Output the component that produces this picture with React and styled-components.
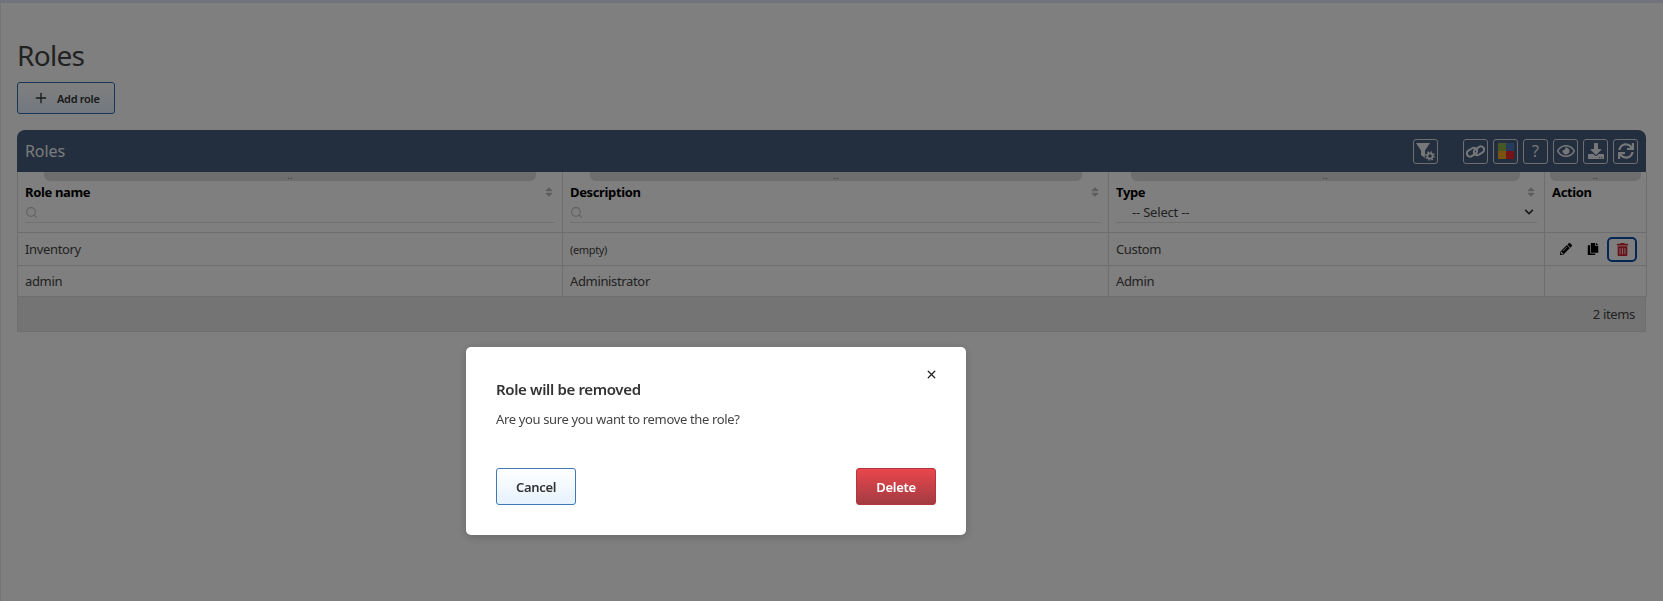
import React from "react";
import styled, { createGlobalStyle } from "styled-components";
import {
  FaRegEye,
  FaDownload,
  FaSync,
  FaPencilAlt,
  FaCopy,
  FaTrashAlt,
  FaSort,
  FaChevronDown,
} from "react-icons/fa";
import { Search, Plus, X } from "lucide-react";

const GlobalStyle = createGlobalStyle`
  html, body {
    margin: 0;
    padding: 0;
    height: 100%;
    background: #fff;
    overflow: hidden;
    font-family: "Noto Sans", "Liberation Sans", sans-serif;
    color: #333;
  }
`;

const Page = styled.div`
  box-sizing: border-box;
  height: 601px;
  border-top: 3px solid #dfe9f5;
  border-left: 1px solid #e8e8e8;
  padding: 35px 18px 0 16px;
`;

const Title = styled.h1`
  margin: 0 0 10px;
  font-size: 28px;
  line-height: 34px;
  font-weight: 400;
  letter-spacing: -0.7px;
  color: #444;
`;

const AddButton = styled.button`
  display: flex;
  align-items: center;
  gap: 8px;
  box-sizing: border-box;
  width: 98px;
  height: 32px;
  padding: 0 0 0 15px;
  border: 1px solid #2f6fb5;
  border-radius: 3px;
  background: linear-gradient(#fff, #e6f2fd);
  font: 600 11px "Noto Sans", sans-serif;
  letter-spacing: -0.3px;
  color: #333;
`;

const Grid = styled.div`
  margin-top: 16px;
  width: 1629px;
`;

const GridHeader = styled.div`
  display: flex;
  align-items: center;
  box-sizing: border-box;
  height: 42px;
  padding: 0 8px;
  border-radius: 8px 8px 0 0;
  background: #475c7d;
`;

const GridTitle = styled.div`
  flex: 1;
  font-size: 16px;
  letter-spacing: -0.1px;
  color: #f4f6f9;
`;

const ToolGroup = styled.div`
  display: flex;
  gap: 5px;
  margin-right: ${({ $spaced }) => ($spaced ? "25px" : "0")};
`;

const ToolButton = styled.div`
  display: flex;
  align-items: center;
  justify-content: center;
  box-sizing: border-box;
  width: 25px;
  height: 25px;
  border: 1px solid #d8dce2;
  border-radius: 3px;
  font-size: ${({ $size }) => $size || 16}px;
  color: #eceef1;
`;

const Swatches = styled.div`
  display: grid;
  grid-template-columns: 8px 8px;
  grid-template-rows: 8px 8px;
`;

const Swatch = styled.span`
  background: ${({ $color }) => $color};
`;

const Table = styled.table`
  width: 100%;
  table-layout: fixed;
  border-collapse: collapse;
  font-size: 13px;
  letter-spacing: -0.35px;
  color: #444;
`;

const HeadCell = styled.th`
  position: relative;
  box-sizing: border-box;
  height: 59px;
  padding: 10px 7px 9px;
  border: 1px solid #dcdcdc;
  border-top: none;
  text-align: left;
  vertical-align: top;
`;

const ResizeGrip = styled.div`
  position: absolute;
  top: 0;
  left: ${({ $left }) => $left}px;
  right: ${({ $right }) => $right}px;
  height: 9px;
  border-radius: 0 0 6px 6px;
  background: #dcdcdc;
  text-align: center;
  font-size: 8px;
  line-height: 8px;
  letter-spacing: 0.5px;
  font-weight: 400;
  color: #555;
`;

const HeadRow = styled.div`
  display: flex;
  align-items: center;
  justify-content: space-between;
  height: 20px;
  font-size: 13px;
  font-weight: 700;
  color: #000;
`;

const SortIcon = styled(FaSort)`
  color: #bdbdbd;
  font-size: 12px;
`;

const FilterBox = styled.div`
  display: flex;
  align-items: center;
  height: 19px;
  margin-top: 1px;
  border-bottom: 1px solid #e2e2e2;
  color: #c0c0c0;
`;

const SelectBox = styled.div`
  position: relative;
  height: 20px;
  border-bottom: 1px solid #e2e2e2;
`;

const TypeSelect = styled.select`
  appearance: none;
  width: 100%;
  height: 20px;
  padding: 0 0 0 16px;
  border: none;
  background: transparent;
  font: 400 13px "Noto Sans", sans-serif;
  letter-spacing: -0.2px;
  color: #444;
`;

const SelectArrow = styled(FaChevronDown)`
  position: absolute;
  right: 3px;
  top: 5px;
  font-size: 10px;
  color: #333;
  pointer-events: none;
`;

const Cell = styled.td`
  box-sizing: border-box;
  height: ${({ $h }) => $h}px;
  padding: 0 7px;
  border: 1px solid #dcdcdc;
  vertical-align: middle;
  font-size: ${({ $small }) => ($small ? "11px" : "13px")};
`;

const Actions = styled.div`
  display: flex;
  align-items: center;
  justify-content: flex-end;
  margin-right: 2px;
`;

const ActionIcon = styled.span`
  display: flex;
  align-items: center;
  justify-content: center;
  width: ${({ $w }) => $w}px;
  font-size: 12px;
  color: #000;
`;

const DeleteAction = styled.span`
  display: flex;
  align-items: center;
  justify-content: center;
  box-sizing: border-box;
  width: 30px;
  height: 25px;
  border: 2px solid #0a4ba8;
  border-radius: 5px;
  font-size: 13px;
  color: #d32330;
`;

const GridFooter = styled.div`
  display: flex;
  align-items: center;
  justify-content: flex-end;
  box-sizing: border-box;
  height: 35px;
  padding: 0 10px;
  border: 1px solid #dcdcdc;
  border-top: none;
  background: #e8e8e8;
  font-size: 13px;
  letter-spacing: -0.35px;
  color: #444;
`;

const Overlay = styled.div`
  position: fixed;
  inset: 0;
  box-sizing: border-box;
  padding: 347px 0 0 466px;
  background: rgba(0, 0, 0, 0.5);
`;

const Modal = styled.div`
  position: relative;
  box-sizing: border-box;
  width: 500px;
  height: 188px;
  padding: 31px 30px 30px;
  border-radius: 5px;
  background: #fff;
  box-shadow: 0 2px 10px rgba(0, 0, 0, 0.2);
`;

const CloseButton = styled.span`
  position: absolute;
  top: 17px;
  right: 28px;
  color: #222;
`;

const ModalTitle = styled.div`
  font-size: 15px;
  line-height: 22px;
  font-weight: 600;
  letter-spacing: -0.35px;
  color: #333;
`;

const ModalText = styled.div`
  margin-top: 9px;
  font-size: 13px;
  line-height: 20px;
  letter-spacing: -0.35px;
  color: #444;
`;

const ModalFooter = styled.div`
  display: flex;
  justify-content: space-between;
  margin-top: 39px;
`;

const ModalButton = styled.button`
  box-sizing: border-box;
  width: 80px;
  height: 37px;
  border-radius: 3px;
  font: 600 13px "Noto Sans", sans-serif;
  letter-spacing: -0.3px;
  border: 1px solid ${({ $danger }) => ($danger ? "#b5363c" : "#3e78b8")};
  color: ${({ $danger }) => ($danger ? "#fff" : "#333")};
  background: ${({ $danger }) =>
    $danger
      ? "linear-gradient(#ea464c, #a23c42)"
      : "linear-gradient(#fff, #e6f2fd)"};
`;

const FilterGearIcon = () => (
  <svg width="21" height="21" viewBox="0 0 21 21">
    <path d="M1 2h14l-5 7.5V17l-4-3V9.5z" fill="#eceef1" />
    <circle cx="15" cy="15" r="5.2" fill="#475c7d" />
    <circle cx="15" cy="15" r="2.6" fill="none" stroke="#eceef1" strokeWidth="1.7" />
    <circle cx="15" cy="15" r="4" fill="none" stroke="#eceef1" strokeWidth="1.6" strokeDasharray="1.6 1.54" />
  </svg>
);

const ChainIcon = () => (
  <svg width="21" height="17" viewBox="0 0 21 17" fill="none" stroke="#eceef1" strokeWidth="2">
    <rect x="1.5" y="6" width="11" height="6.4" rx="3.2" transform="rotate(-32 7 9.2)" />
    <rect x="8.5" y="4.6" width="11" height="6.4" rx="3.2" transform="rotate(-32 14 7.8)" />
  </svg>
);

const columns = [
  { width: 545, label: "Role name", grip: [26, 26], filter: "search" },
  { width: 546, label: "Description", grip: [27, 26], filter: "search" },
  { width: 436, label: "Type", grip: [22, 24], filter: "select" },
  { width: 102, label: "Action", grip: [5, 5] },
];

const swatchColors = ["#8fb04a", "#4a7ab8", "#f0a820", "#e82830"];

export default function App() {
  return (
    <>
      <GlobalStyle />
      <Page>
        <Title>Roles</Title>
        <AddButton>
          <Plus size={16} strokeWidth={2} />
          Add role
        </AddButton>
        <Grid>
          <GridHeader>
            <GridTitle>Roles</GridTitle>
            <ToolGroup $spaced>
              <ToolButton>
                <FilterGearIcon />
              </ToolButton>
            </ToolGroup>
            <ToolGroup>
              <ToolButton>
                <ChainIcon />
              </ToolButton>
              <ToolButton>
                <Swatches>
                  {swatchColors.map((color) => (
                    <Swatch key={color} $color={color} />
                  ))}
                </Swatches>
              </ToolButton>
              <ToolButton>?</ToolButton>
              <ToolButton $size={18}>
                <FaRegEye />
              </ToolButton>
              <ToolButton>
                <FaDownload />
              </ToolButton>
              <ToolButton>
                <FaSync />
              </ToolButton>
            </ToolGroup>
          </GridHeader>
          <Table>
            <colgroup>
              {columns.map((col) => (
                <col key={col.label} style={{ width: col.width }} />
              ))}
            </colgroup>
            <thead>
              <tr>
                {columns.map((col) => (
                  <HeadCell key={col.label}>
                    <ResizeGrip $left={col.grip[0]} $right={col.grip[1]}>
                      ..
                    </ResizeGrip>
                    <HeadRow>
                      {col.label}
                      {col.filter && <SortIcon />}
                    </HeadRow>
                    {col.filter === "search" && (
                      <FilterBox>
                        <Search size={13} />
                      </FilterBox>
                    )}
                    {col.filter === "select" && (
                      <SelectBox>
                        <TypeSelect defaultValue="">
                          <option value="">-- Select --</option>
                        </TypeSelect>
                        <SelectArrow />
                      </SelectBox>
                    )}
                  </HeadCell>
                ))}
              </tr>
            </thead>
            <tbody>
              <tr>
                <Cell $h={33}>Inventory</Cell>
                <Cell $h={33} $small>
                  (empty)
                </Cell>
                <Cell $h={33}>Custom</Cell>
                <Cell $h={33}>
                  <Actions>
                    <ActionIcon $w={26}>
                      <FaPencilAlt />
                    </ActionIcon>
                    <ActionIcon $w={28}>
                      <FaCopy />
                    </ActionIcon>
                    <DeleteAction>
                      <FaTrashAlt />
                    </DeleteAction>
                  </Actions>
                </Cell>
              </tr>
              <tr>
                <Cell $h={31}>admin</Cell>
                <Cell $h={31}>Administrator</Cell>
                <Cell $h={31}>Admin</Cell>
                <Cell $h={31} />
              </tr>
            </tbody>
          </Table>
          <GridFooter>2 items</GridFooter>
        </Grid>
      </Page>
      <Overlay>
        <Modal>
          <CloseButton>
            <X size={13} strokeWidth={2.4} />
          </CloseButton>
          <ModalTitle>Role will be removed</ModalTitle>
          <ModalText>Are you sure you want to remove the role?</ModalText>
          <ModalFooter>
            <ModalButton>Cancel</ModalButton>
            <ModalButton $danger>Delete</ModalButton>
          </ModalFooter>
        </Modal>
      </Overlay>
    </>
  );
}
